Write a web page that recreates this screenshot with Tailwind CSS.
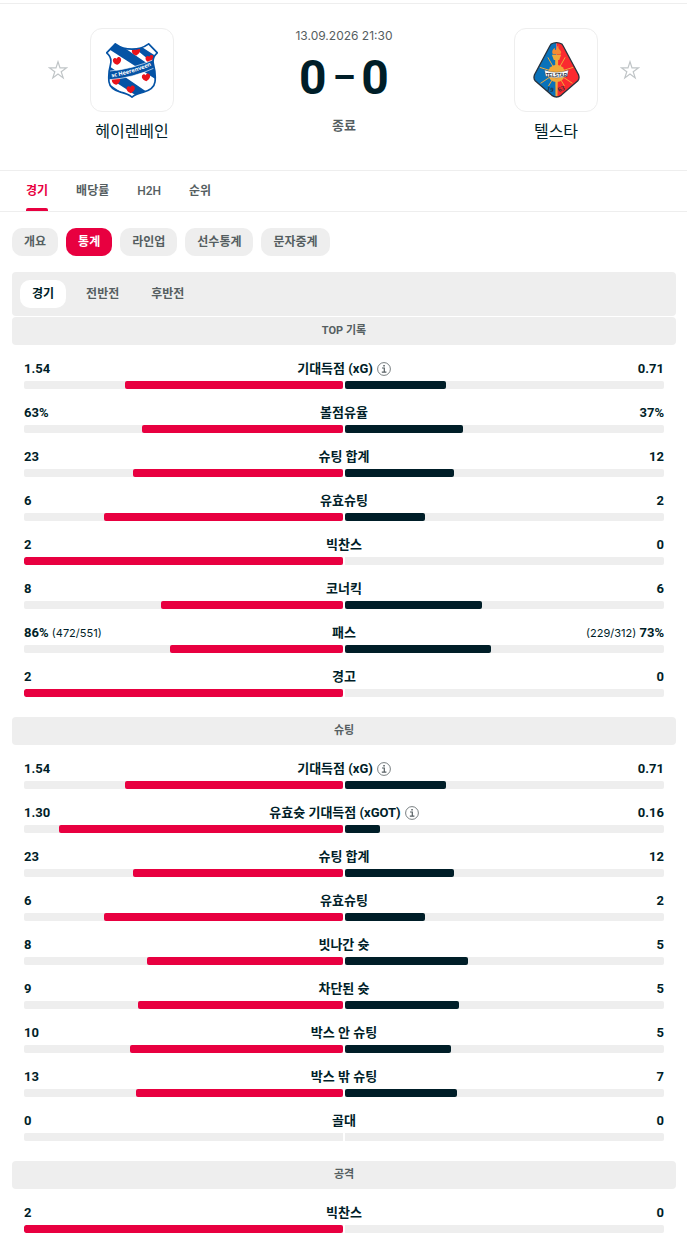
<!DOCTYPE html>
<html lang="ko">
<head>
  <meta charset="UTF-8" />
  <meta name="viewport" content="width=device-width, initial-scale=1.0"/>
  <title>헤이렌베인 - 텔스타</title>
  <script src="https://cdn.jsdelivr.net/npm/@tailwindcss/browser@4"></script>
</head>
<body class="bg-white font-['Roboto','Noto_Sans_CJK_KR',sans-serif] text-[#001e28]">

  <header class="mt-[3px] grid grid-cols-3 border-t border-b border-[#eee] pt-6 pr-[25px] pb-[26px] pl-[26px]">
    <!-- home team -->
    <div class="grid grid-cols-[1fr_auto_1fr] items-center">
      <button type="button" aria-label="헤이렌베인 즐겨찾기" class="mx-auto text-[#c0c5c7]">
        <svg class="size-5" viewBox="0 0 20 20" fill="none" stroke="currentColor" stroke-width="1.2"><path d="M10 1.8l2 6.1h6.4l-5.2 3.8 2 6.2-5.2-3.8-5.2 3.8 2-6.2L1.600 7.900H8z"/></svg>
      </button>
      <a href="#" aria-label="헤이렌베인" class="flex size-[84px] items-center justify-center rounded-xl border border-[#eee]">
        <svg class="h-[55px] w-[52px]" viewBox="0 0 156 164">
          <defs>
            <clipPath id="shield"><path d="M28 2Q50 18 78 18Q106 18 128 2L154 29Q138 42 142 62Q150 92 147 116Q144 138 112 147Q90 152 78 162Q66 152 44 147Q12 138 9 116Q6 92 14 62Q18 42 2 29Z"/></clipPath>
            <path id="leaf" d="M0 12C-9 10-15 3-13-4C-11-9-5-10-2-6C0-12 7-13 10-8C14-2 9 8 0 12Z"/>
          </defs>
          <g clip-path="url(#shield)">
            <rect width="156" height="164" fill="#fff"/>
            <path d="M-4 10L20-10L176 96V126ZM60 -6L90 0L170 52V84ZM-10 56L166 176V206L-10 92Z" fill="#0553a5"/>
            <path d="M-10 110L70 164H-10Z" fill="#0553a5"/>
            <g fill="#e8131b">
              <use href="#leaf" x="34" y="53"/><use href="#leaf" x="91" y="25"/><use href="#leaf" x="132" y="47"/>
              <use href="#leaf" x="31" y="113"/><use href="#leaf" x="121" y="102"/><use href="#leaf" x="75" y="138"/>
            </g>
            <path d="M8 84Q80 78 146 48V74Q84 104 8 110Z" fill="#0553a5" stroke="#fff" stroke-width="2"/>
          </g>
          <path d="M28 2Q50 18 78 18Q106 18 128 2L154 29Q138 42 142 62Q150 92 147 116Q144 138 112 147Q90 152 78 162Q66 152 44 147Q12 138 9 116Q6 92 14 62Q18 42 2 29Z" fill="none" stroke="#0553a5" stroke-width="5"/>
          <path id="band" d="M17 102Q82 92 144 64" fill="none"/>
          <text font-family="Noto Sans" font-weight="700" font-size="17" fill="#fff"><textPath href="#band">sc Heerenveen</textPath></text>
        </svg>
      </a>
      <a href="#" class="col-span-3 mt-2 text-center text-base leading-6">헤이렌베인</a>
    </div>

    <div class="flex flex-col items-center">
      <time class="font-['Inter'] text-xs leading-4 text-[#555e61]">13.09.2026 21:30</time>
      <div class="mt-2 flex items-center gap-1.5 pt-0.5 text-5xl leading-[48px] font-bold">
        <span>0</span><span class="text-4xl leading-[48px]">–</span><span>0</span>
      </div>
      <span class="mt-3.5 text-[13px] leading-5 font-bold text-[#555e61]">종료</span>
    </div>

    <!-- away team -->
    <div class="grid grid-cols-[1fr_auto_1fr] items-center">
      <a href="#" aria-label="텔스타" class="col-start-2 flex size-[84px] items-center justify-center rounded-xl border border-[#eee]">
        <svg class="h-14 w-[47px]" viewBox="0 0 140 168">
          <defs>
            <clipPath id="kite"><path d="M54 6Q70-2 86 6L90 12L136 98Q140 110 134 116L84 160Q70 170 56 160L6 116Q0 110 4 98L50 12Z"/></clipPath>
          </defs>
          <g clip-path="url(#kite)">
            <rect width="70" height="168" fill="#0a72ba"/>
            <rect x="70" width="70" height="168" fill="#fb2a2f"/>
            <g stroke="#f0a93b" stroke-width="3">
              <path d="M70 92L44 46M70 92L20 76M70 92L96 46M70 92L120 76M70 92L22 124M70 92L118 124M70 92L46 132M70 92L94 132"/>
            </g>
            <circle cx="70" cy="94" r="26" fill="#f0a93b"/>
            <path d="M66 50H75L73 162H67Z" fill="#f0a93b"/>
            <path d="M56 38H84L78 54H62Z" fill="#f0a93b"/>
            <path d="M59 37Q53 25 65 17Q64 25 69 24Q68 15 76 10Q74 20 81 25Q87 31 81 37Z" fill="#f68b33"/>
            <text x="42" y="146" font-family="Liberation Serif" font-weight="700" font-size="20" fill="#27313d" transform="rotate(16 42 140)">19</text>
            <text x="77" y="150" font-family="Liberation Serif" font-weight="700" font-size="20" fill="#27313d" transform="rotate(-22 77 150)">63</text>
          </g>
          <path d="M34 84Q70 98 106 84L102 103Q70 112 38 103Z" fill="#fff" stroke="#27313d" stroke-width="1"/>
          <text x="70" y="104" text-anchor="middle" font-family="Liberation Sans" font-weight="700" font-size="14" fill="#27313d">TELSTAR</text>
          <path d="M54 6Q70-2 86 6L90 12L136 98Q140 110 134 116L84 160Q70 170 56 160L6 116Q0 110 4 98L50 12Z" fill="none" stroke="#27313d" stroke-width="4"/>
        </svg>
      </a>
      <button type="button" aria-label="텔스타 즐겨찾기" class="mx-auto text-[#c0c5c7]">
        <svg class="size-5" viewBox="0 0 20 20" fill="none" stroke="currentColor" stroke-width="1.2"><path d="M10 1.8l2 6.1h6.4l-5.2 3.8 2 6.2-5.2-3.8-5.2 3.8 2-6.2L1.600 7.900H8z"/></svg>
      </button>
      <a href="#" class="col-span-3 mt-2 text-center text-base leading-6">텔스타</a>
    </div>
  </header>

  <nav class="flex h-[41px] gap-7 border-b border-[#eee] px-[26px] text-xs font-bold text-[#555e61]">
    <a href="#" class="relative flex items-center text-[#e80040] after:absolute after:inset-x-0 after:bottom-0 after:h-[3px] after:rounded-t-xs after:bg-[#e80040]">경기</a>
    <a href="#" class="flex items-center">배당률</a>
    <a href="#" class="flex items-center font-medium">H2H</a>
    <a href="#" class="flex items-center">순위</a>
  </nav>

  <main class="pt-4 pr-[11px] pl-3">
    <nav class="flex gap-2 text-xs font-bold text-[#555e61]">
      <a href="#" class="flex h-7 items-center rounded-[10px] bg-[#eee] px-3">개요</a>
      <a href="#" class="flex h-7 items-center rounded-[10px] bg-[#e80040] px-3 text-white">통계</a>
      <a href="#" class="flex h-7 items-center rounded-[10px] bg-[#eee] px-3">라인업</a>
      <a href="#" class="flex h-7 items-center rounded-[10px] bg-[#eee] px-3">선수통계</a>
      <a href="#" class="flex h-7 items-center rounded-[10px] bg-[#eee] px-3">문자중계</a>
    </nav>

    <div class="mt-4 mb-px flex gap-2 rounded-sm bg-[#eee] p-2 text-xs font-bold text-[#555e61]">
      <button type="button" class="h-7 rounded-[10px] bg-white px-3 text-[#001e28]">경기</button>
      <button type="button" class="h-7 rounded-[10px] px-3">전반전</button>
      <button type="button" class="h-7 rounded-[10px] px-3">후반전</button>
    </div>

    <div id="stats"></div>
  </main>

  <script>
    const sections = [
      {
        title: "TOP 기록",
        rows: [
          { label: "기대득점 (xG)", home: "1.54", away: "0.71", info: true },
          { label: "볼점유율", home: "63%", away: "37%" },
          { label: "슈팅 합계", home: "23", away: "12" },
          { label: "유효슈팅", home: "6", away: "2" },
          { label: "빅찬스", home: "2", away: "0" },
          { label: "코너킥", home: "8", away: "6" },
          { label: "패스", home: "86%", away: "73%", homeSub: "(472/551)", awaySub: "(229/312)" },
          { label: "경고", home: "2", away: "0" }
        ]
      },
      {
        title: "슈팅",
        rows: [
          { label: "기대득점 (xG)", home: "1.54", away: "0.71", info: true },
          { label: "유효슛 기대득점 (xGOT)", home: "1.30", away: "0.16", info: true },
          { label: "슈팅 합계", home: "23", away: "12" },
          { label: "유효슈팅", home: "6", away: "2" },
          { label: "빗나간 슛", home: "8", away: "5" },
          { label: "차단된 슛", home: "9", away: "5" },
          { label: "박스 안 슈팅", home: "10", away: "5" },
          { label: "박스 밖 슈팅", home: "13", away: "7" },
          { label: "골대", home: "0", away: "0" }
        ]
      },
      {
        title: "공격",
        rows: [
          { label: "빅찬스", home: "2", away: "0" }
        ]
      }
    ];

    const infoIcon = `
      <button type="button" aria-label="설명">
        <svg class="size-[14px]" viewBox="0 0 14 14" fill="none" stroke="#555e61">
          <circle cx="7" cy="7" r="6.4" stroke-width="0.8"/>
          <path d="M5 6H7.300V10M4.800 10.200H9.400" stroke-width="1.200"/>
          <path d="M6.300 3.700H7.800" stroke-width="1.500"/>
        </svg>
      </button>`;

    function share(value, other) {
      const a = parseFloat(value);
      const b = parseFloat(other);
      return a + b === 0 ? 0 : (a / (a + b)) * 100;
    }

    function renderRow(r) {
      return `
        <div class="pt-4">
          <div class="grid grid-cols-[1fr_auto_1fr] items-center text-[13px] leading-4">
            <div><strong>${r.home}</strong> ${r.homeSub ? `<span class="font-['Inter'] text-[11px]">${r.homeSub}</span>` : ''}</div>
            <div class="flex items-center gap-1 font-bold">
              <span>${r.label}</span>${r.info ? infoIcon : ''}
            </div>
            <div class="text-right">${r.awaySub ? `<span class="font-['Inter'] text-[11px]">${r.awaySub}</span>` : ''} <strong>${r.away}</strong></div>
          </div>
          <div class="mt-1 grid grid-cols-2 gap-0.5">
            <div class="flex h-2 justify-end overflow-hidden rounded-l-xs bg-[#eee]">
              <div class="rounded-xs bg-[#e80040]" style="width: ${share(r.home, r.away)}%"></div>
            </div>
            <div class="flex h-2 overflow-hidden rounded-r-xs bg-[#eee]">
              <div class="rounded-xs bg-[#001e28]" style="width: ${share(r.away, r.home)}%"></div>
            </div>
          </div>
        </div>`;
    }

    document.getElementById('stats').innerHTML = sections.map(s => `
      <section class="pb-5">
        <h2 class="flex h-7 items-center justify-center rounded-sm bg-[#eee] text-[11px] font-bold text-[#555e61]">${s.title}</h2>
        <div class="px-3">${s.rows.map(renderRow).join('')}</div>
      </section>
    `).join('');
  </script>
</body>
</html>
